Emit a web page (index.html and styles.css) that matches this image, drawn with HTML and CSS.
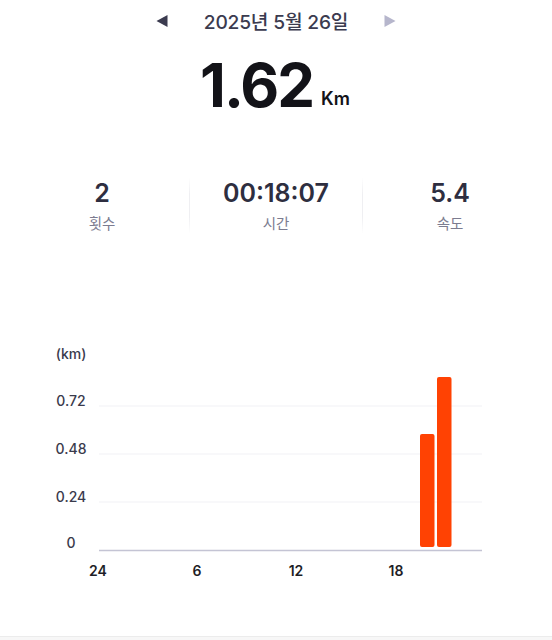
FILE: index.html
```html
<!DOCTYPE html>
<html lang="ko">
<head>
<meta charset="utf-8">
<title>일일 기록</title>
<link rel="stylesheet" href="styles.css">
</head>
<body>
<div class="page">
  <header class="date-nav">
    <svg class="arrow" width="12" height="14" viewBox="0 0 12 14"><polygon points="11.5,1 11.5,13 0.5,7" fill="#3b3b4f"/></svg>
    <span class="date">2025년 5월 26일</span>
    <svg class="arrow" width="12" height="14" viewBox="0 0 12 14"><polygon points="0.5,1 0.5,13 11.5,7" fill="#b6b6cc"/></svg>
  </header>

  <div class="total">
    <span class="total-value">1.62</span>
    <span class="total-unit">Km</span>
  </div>

  <div class="stats">
    <div class="stat">
      <div class="stat-value">2</div>
      <div class="stat-label">횟수</div>
    </div>
    <div class="stat stat-mid">
      <div class="stat-value">00:18:07</div>
      <div class="stat-label">시간</div>
    </div>
    <div class="stat">
      <div class="stat-value">5.4</div>
      <div class="stat-label">속도</div>
    </div>
  </div>

  <div class="chart">
    <svg width="552" height="260" viewBox="0 0 552 260">
      <g class="grid">
        <line x1="99" y1="76" x2="482" y2="76"/>
        <line x1="99" y1="124" x2="482" y2="124"/>
        <line x1="99" y1="172" x2="482" y2="172"/>
      </g>
      <line class="axis" x1="99" y1="220.5" x2="482" y2="220.5"/>
      <g class="ylabels">
        <text x="71" y="29">(km)</text>
        <text x="71" y="76">0.72</text>
        <text x="71" y="124">0.48</text>
        <text x="71" y="172">0.24</text>
        <text x="71" y="218">0</text>
      </g>
      <g class="bars">
        <rect x="420" y="104" width="14.5" height="113" rx="2"/>
        <rect x="437" y="47" width="14.5" height="170" rx="2"/>
      </g>
      <g class="xlabels">
        <text x="98" y="246">24</text>
        <text x="197" y="246">6</text>
        <text x="296" y="246">12</text>
        <text x="396" y="246">18</text>
      </g>
    </svg>
  </div>

  <footer class="bottom-bar"></footer>
</div>
</body>
</html>
```

FILE: styles.css
```css
* { box-sizing: border-box; }
html, body {
  margin: 0;
  padding: 0;
  background: #ffffff;
}
body {
  font-family: Inter, "Noto Sans CJK KR", "Noto Sans", sans-serif;
  color: #2e2e40;
}
.page {
  width: 552px;
  height: 640px;
  display: flex;
  flex-direction: column;
  overflow: hidden;
}
.date-nav {
  display: flex;
  justify-content: center;
  align-items: center;
  gap: 36px;
  height: 42px;
}
.arrow { display: block; }
.date {
  font-size: 19.2px;
  font-weight: 500;
  color: #3b3b4f;
  letter-spacing: -0.2px;
}
.total {
  display: flex;
  justify-content: center;
  align-items: baseline;
  gap: 8px;
  margin-top: 8px;
  height: 70px;
  padding-right: 2px;
}
.total-value {
  font-size: 60px;
  font-weight: 700;
  color: #131318;
  letter-spacing: -2px;
  line-height: 70px;
}
.total-unit {
  font-size: 18px;
  font-weight: 600;
  color: #131318;
  position: relative;
  top: -2px;
}
.stats {
  display: grid;
  grid-template-columns: repeat(3, 1fr);
  margin: 58px 15px 0 15px;
}
.stat {
  display: flex;
  flex-direction: column;
  align-items: center;
}
.stat-mid {
  border-left: 1px solid;
  border-right: 1px solid;
  border-image: linear-gradient(to bottom, rgba(240,240,243,0), #efeff2 30%, #efeff2 70%, rgba(240,240,243,0)) 1;
}
.stat-value {
  font-size: 25px;
  font-weight: 600;
  color: #2e2e40;
  line-height: 30px;
}
.stat-label {
  font-size: 14.5px;
  color: #7c7c90;
  margin-top: 7px;
  line-height: 18px;
}
.chart {
  margin-top: 97px;
  height: 260px;
}
.chart svg { display: block; }
.grid line {
  stroke: #f1f1f5;
  stroke-width: 1;
}
.axis {
  stroke: #c4c4d4;
  stroke-width: 1.5;
}
.ylabels text {
  font-family: Inter, sans-serif;
  font-size: 14px;
  font-weight: 500;
  fill: #3a3a4c;
  text-anchor: middle;
}
.xlabels text {
  font-family: Inter, sans-serif;
  font-size: 14px;
  font-weight: 600;
  fill: #1e1e26;
  text-anchor: middle;
}
.bars rect { fill: #ff4203; }
.bottom-bar {
  margin-top: auto;
  height: 4px;
  border-top: 1px solid #ececec;
  background: #f7f7f7;
}
```
